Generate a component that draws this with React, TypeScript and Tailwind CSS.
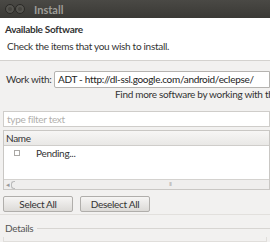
import React from 'react';

function WinButton() {
  return (
    <span className="w-[10px] h-[10px] rounded-full bg-[#55544f] border border-[#2a2926] flex items-center justify-center">
      <span className="w-[4px] h-[4px] rounded-full bg-[#45443f]" />
    </span>
  );
}

export default function App() {
  return (
    <div
      className="w-[270px] h-[242px] overflow-hidden bg-[#f2f1f0] text-[#333] flex flex-col text-[10px] tracking-[-0.3px]"
      style={{ fontFamily: 'Lato, "Open Sans", sans-serif' }}
    >
      {/* title bar */}
      <div className="h-[18px] shrink-0 bg-gradient-to-b from-[#4a4945] to-[#3a3935] flex items-center pl-[5px]">
        <WinButton />
        <WinButton />
        <span className="ml-[9px] text-[11px] font-bold text-[#9e9d98] leading-none tracking-normal">Install</span>
      </div>

      {/* header */}
      <div className="h-[43px] shrink-0 bg-white border-b border-[#d4d2cf] px-[5px] pt-[5px]">
        <div className="font-bold leading-[13px]">Available Software</div>
        <div className="leading-[15px] mt-[3px] ml-[2px] whitespace-nowrap">
          Check the items that you wish to install.
        </div>
      </div>

      {/* work with */}
      <div className="mt-[10px] flex items-center pl-[6px]">
        <span className="w-[48px] shrink-0 whitespace-nowrap">Work with:</span>
        <div className="flex-1 h-[17px] bg-white border border-[#b5b3b0] rounded-l-[2px] flex items-center pl-[3px] text-[#222] whitespace-nowrap overflow-hidden">
          ADT - http://dl-ssl.google.com/android/eclepse/
        </div>
      </div>
      <div className="pl-[115px] leading-[13px] whitespace-nowrap">
        Find more software by working with the
      </div>

      {/* filter */}
      <div className="mt-[10px] ml-[3px] h-[16px] shrink-0 bg-white border border-[#cfcdca] flex items-center pl-[3px] text-[#b2b0ad] leading-none">
        type filter text
      </div>

      {/* table */}
      <div className="mt-[3px] ml-[3px] h-[60px] shrink-0 bg-white border border-[#c9c7c4] flex flex-col">
        <div className="h-[15px] shrink-0 bg-gradient-to-b from-[#f7f6f5] to-[#e9e8e6] border-b border-[#cfcdca] flex items-center pl-[2px]">
          Name
        </div>
        <div className="flex items-center h-[14px] pl-[10px]">
          <span className="w-[6px] h-[6px] border border-[#aaa8a5] bg-white" />
          <span className="ml-[16px]">Pending...</span>
        </div>
        <div className="flex-1" />
        <div className="h-[10px] shrink-0 border-t border-[#d4d2cf] bg-[#efeeed] flex items-center relative">
          <span className="text-[7px] text-[#999] pl-[2px] leading-none">◂</span>
          <span className="ml-[1px] w-[4px] h-[8px] border border-l-[#bbb] border-y-[#bbb] border-r-0 rounded-l-[3px]" />
          <span className="absolute left-[165px] top-[1px] text-[6px] text-[#b5b3b0] leading-none tracking-[-1px]">III</span>
        </div>
      </div>

      {/* buttons */}
      <div className="mt-[6px] pl-[3px] flex gap-[7px]">
        <div className="w-[70px] h-[16px] rounded-[2px] border border-[#b0aeab] bg-gradient-to-b from-[#f6f5f4] to-[#dcdad7] flex items-center justify-center">
          Select All
        </div>
        <div className="w-[70px] h-[16px] rounded-[2px] border border-[#b0aeab] bg-gradient-to-b from-[#f6f5f4] to-[#dcdad7] flex items-center justify-center">
          Deselect All
        </div>
      </div>
      <div className="mt-[2px] border-t border-[#e2e0dd]" />

      {/* details group */}
      <div className="mt-[7px] flex items-center pl-[5px] leading-[12px]">
        <span className="text-[#555]">Details</span>
        <span className="flex-1 ml-[4px] border-t border-[#d7d5d2]" />
      </div>
      <div className="mt-[3px] mx-[3px] h-[6px] border border-t-0 border-[#e0dedb]" />
    </div>
  );
}
